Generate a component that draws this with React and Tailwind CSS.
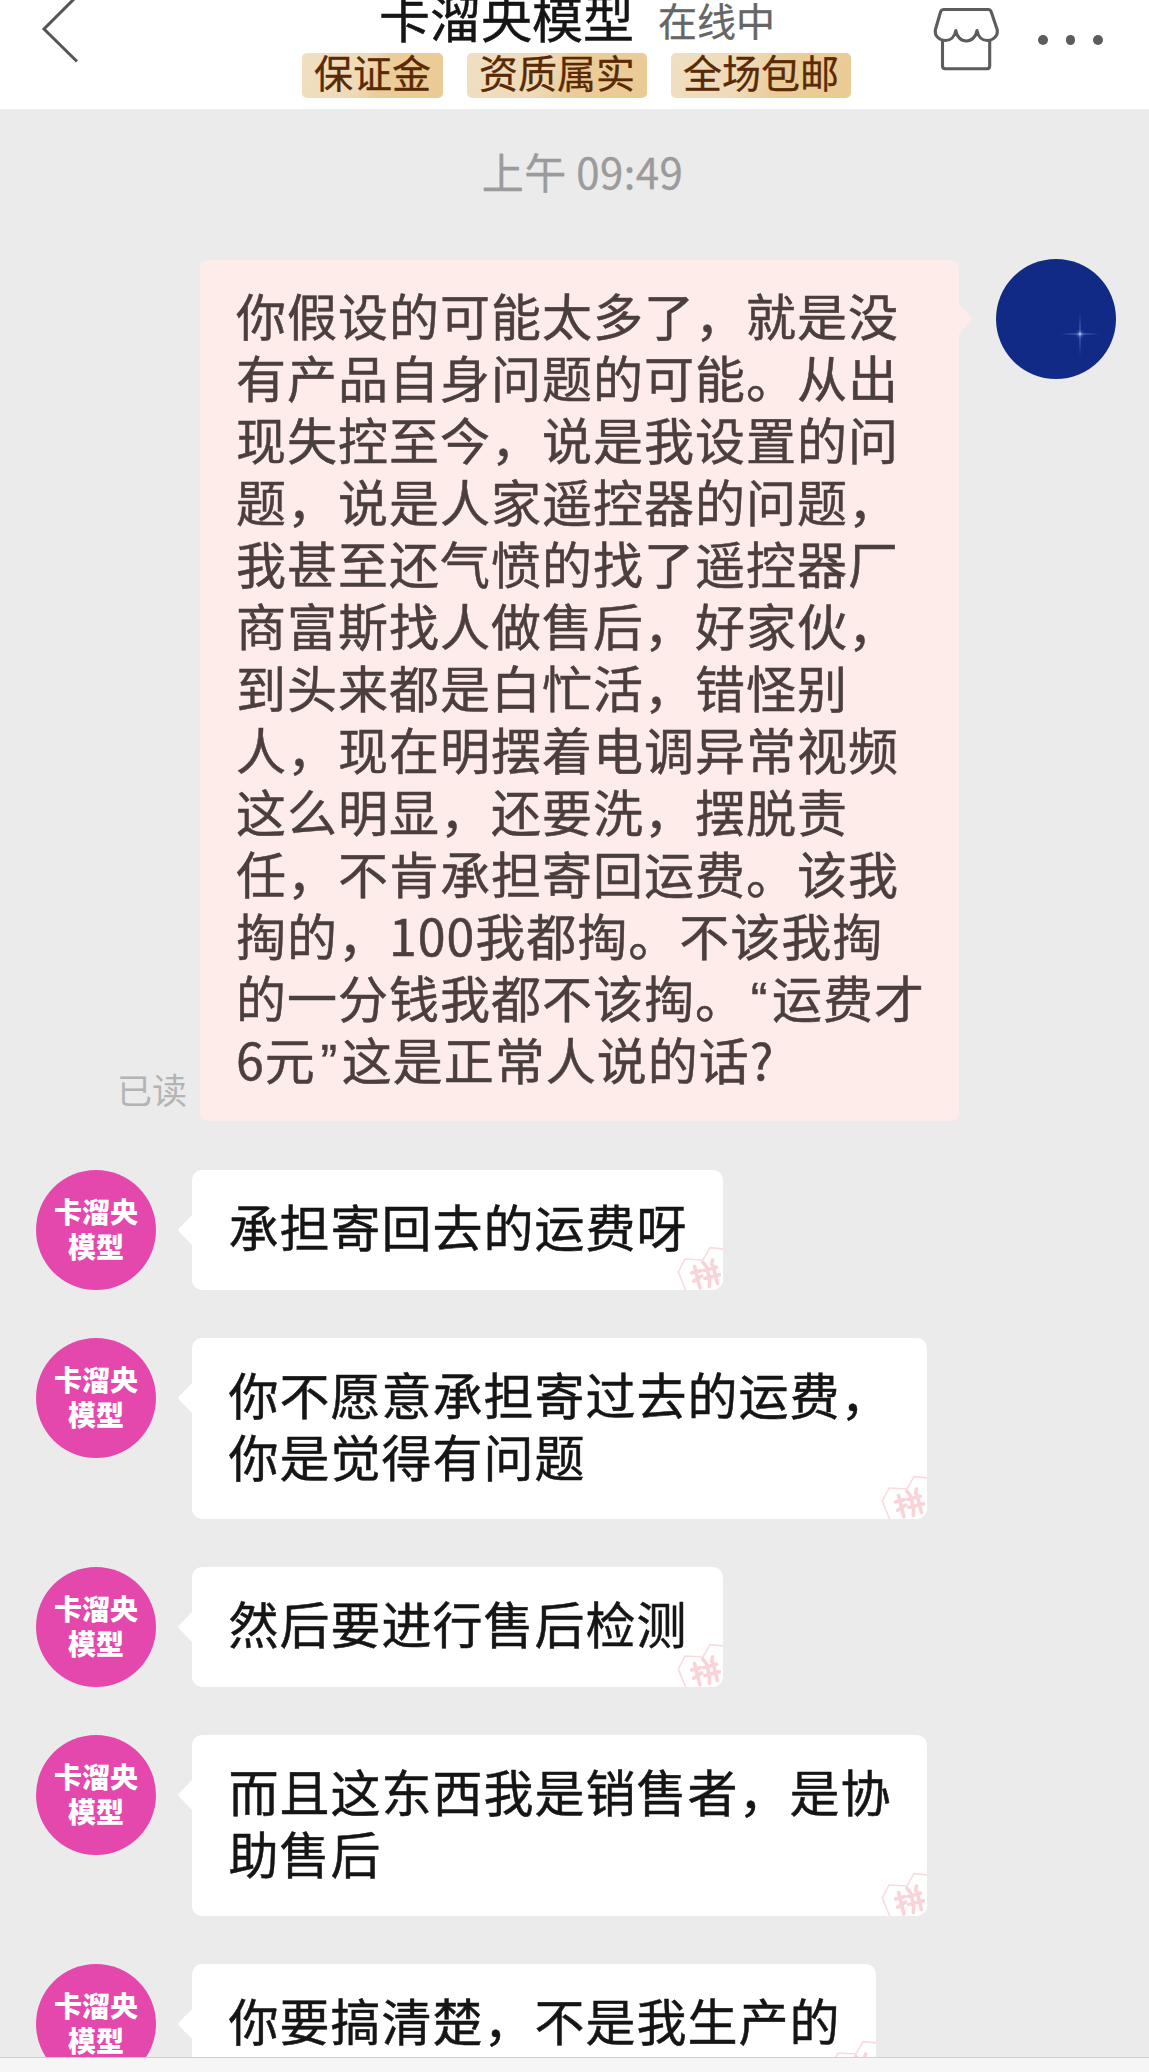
const CJK = "font-['Noto_Sans_CJK_SC',sans-serif]";

function BackIcon() {
  return (
    <svg className="ml-[36px] block shrink-0" width="48" height="70" viewBox="36 0 48 70" fill="none" stroke="#555" strokeWidth="3">
      <path d="M76-3 44 29 77 61.500" />
    </svg>
  );
}

function ShopIcon() {
  return (
    <svg className="block shrink-0" width="70" height="76" viewBox="931 0 70 76" fill="none" stroke="#5c5c5c" strokeWidth="3.100" strokeLinejoin="round">
      <path d="M944 9.500H988q2.500 0 3.200 2.300L997.300 30c.8 6-4.300 10.500-10 10.500-5 0-9.300-3.500-10.300-10-1 6.500-5.500 10.500-10.700 10.500s-9.500-4-10.500-10.500c-1 6.500-5.400 10-10.300 10-6 0-11-4.500-10.200-10.500L940.600 11.800q.8-2.300 3.400-2.300Z" />
      <path d="M942.500 40.500V66q0 2.700 2.700 2.700H987q2.700 0 2.700-2.700V40.500" />
    </svg>
  );
}

function Badge({ children }) {
  return (
    <span className="h-[45px] rounded-[5px] bg-[linear-gradient(112deg,#f0dfc2_0%,#efdab8_42%,#ebcd9a_58%,#ebcb94_100%)] px-3 text-[39px] leading-[37px] text-[#5a2a05] [-webkit-text-stroke:0.3px]">
      {children}
    </span>
  );
}

function Watermark() {
  return (
    <svg className="absolute right-0 bottom-0" width="50" height="46" viewBox="0 0 50 46" fill="none" stroke="#f9d3d7">
      <path d="M52 5 37 3.700 30 16 12 15 5.300 28 12.700 46" strokeWidth="1.600" strokeOpacity=".85" />
      <g strokeWidth="3.600" strokeLinecap="round" transform="rotate(-14 33 31)">
        <path d="M24 20v22M19.500 25.500h9M19.500 34l9-3M33 18l2 4M43 18l-2 4M32 26h13M31 34h15M35.500 24v12l-2 7M42 24v18" />
      </g>
    </svg>
  );
}

function SellerMessage({ lines }) {
  return (
    <div className="flex shrink-0 items-start pl-9">
      <div className="flex size-[120px] shrink-0 flex-col items-center justify-center rounded-full bg-[#e548ac] pb-[3px] text-[28px] leading-[35px] font-black text-white">
        <span>卡溜央</span>
        <span>模型</span>
      </div>
      <svg className="mt-[44px] ml-[21px] shrink-0" width="15" height="32" viewBox="0 0 15 32" fill="#fff">
        <path d="M15 1 2 14.500q-1.500 1.500 0 3L15 31Z" />
      </svg>
      <div className="relative min-h-[120px] overflow-hidden rounded-[10px] bg-white pt-6 pr-[35.500px] pb-[33px] pl-[36.500px] text-[50px] leading-[62px] tracking-[1px] text-[#151515] [-webkit-text-stroke:0.5px]">
        <Watermark />
        {lines.map((line) => (
          <div key={line} className="relative whitespace-nowrap">{line}</div>
        ))}
      </div>
    </div>
  );
}

function Quote({ children }) {
  return <span className="inline-block w-[26px] text-center font-['Liberation_Sans',sans-serif] text-[50px] leading-none tracking-normal">{children}</span>;
}

const MINE = [
  "你假设的可能太多了，就是没",
  "有产品自身问题的可能。从出",
  "现失控至今，说是我设置的问",
  "题，说是人家遥控器的问题，",
  "我甚至还气愤的找了遥控器厂",
  "商富斯找人做售后，好家伙，",
  "到头来都是白忙活，错怪别",
  "人，现在明摆着电调异常视频",
  "这么明显，还要洗，摆脱责",
  "任，不肯承担寄回运费。该我",
  "掏的，100我都掏。不该我掏",
  <>的一分钱我都不该掏。<Quote>“</Quote>运费才</>,
  <>6元<Quote>”</Quote>这是正常人说的话?</>,
];

const SELLER = [
  ["承担寄回去的运费呀"],
  ["你不愿意承担寄过去的运费，", "你是觉得有问题"],
  ["然后要进行售后检测"],
  ["而且这东西我是销售者，是协", "助售后"],
  ["你要搞清楚，不是我生产的"],
];

export default function App() {
  return (
    <div lang="zh-CN" className={`flex h-[2072px] w-[1149px] flex-col overflow-hidden bg-[#ebebeb] ${CJK}`}>
      <header className="flex h-[109px] shrink-0 items-start bg-white">
        <BackIcon />
        <div className="ml-[218px] flex w-[549px] shrink-0 flex-col">
          <div className="flex h-[53px] items-end pl-[77px] whitespace-nowrap">
            <h1 className="mb-[11px] w-[255px] text-[51px] leading-[51px] text-[#151515] [-webkit-text-stroke:0.5px]">卡溜央模型</h1>
            <span className="mb-[12px] ml-[24px] text-[39px] leading-[43px] text-[#666] [-webkit-text-stroke:0.3px]">在线中</span>
          </div>
          <div className="flex gap-6">
            <Badge>保证金</Badge>
            <Badge>资质属实</Badge>
            <Badge>全场包邮</Badge>
          </div>
        </div>
        <div className="ml-[80px] flex items-start">
          <ShopIcon />
          <div className="mt-[35px] ml-[37px] flex gap-[18px]">
            <i className="size-[9.500px] rounded-full bg-[#5c5c5c]" />
            <i className="size-[9.500px] rounded-full bg-[#5c5c5c]" />
            <i className="size-[9.500px] rounded-full bg-[#5c5c5c]" />
          </div>
        </div>
      </header>

      <main className="flex h-[1948px] shrink-0 flex-col overflow-hidden">
        <time className="mt-[32px] block h-[62px] shrink-0 pl-[16px] text-center text-[42px] leading-[60px] tracking-[0.4px] text-[#9b9b9b] [-webkit-text-stroke:0.3px]">上午 09:49</time>

        <section className="mt-[56px] flex shrink-0 items-start">
          <span className="mt-[805px] w-[200px] shrink-0 pr-[13px] text-right text-[35px] leading-[50px] text-[#b4b4b4]">已读</span>
          <div className="mt-px h-[861px] w-[759px] shrink-0 rounded-[8px] bg-[#feecea] pt-[23px] pl-9 text-[50px] leading-[62px] tracking-[1px] text-[#4a3f3d] [-webkit-text-stroke:0.5px]">
            {MINE.map((line, i) => (
              <div key={i} className="h-[62px] whitespace-nowrap">{line}</div>
            ))}
          </div>
          <svg className="mt-[44px] shrink-0" width="15" height="32" viewBox="0 0 15 32" fill="#feecea">
            <path d="M0 1 12.500 14.500q1.500 1.500 0 3L0 31Z" />
          </svg>
          <svg className="ml-[22px] shrink-0" width="120" height="120" viewBox="0 0 120 120">
            <defs>
              <radialGradient id="glow">
                <stop offset="0" stopColor="#fff" />
                <stop offset=".3" stopColor="#8fa6e8" stopOpacity=".5" />
                <stop offset="1" stopColor="#4a66bd" stopOpacity="0" />
              </radialGradient>
            </defs>
            <circle cx="60" cy="60" r="60" fill="#112a86" />
            <ellipse cx="84" cy="75" rx="24" ry="1" fill="url(#glow)" />
            <ellipse cx="84" cy="75" rx="1" ry="28" fill="url(#glow)" />
            <circle cx="84" cy="75" r="5" fill="url(#glow)" />
          </svg>
        </section>

        <section className="mt-[49px] flex flex-col gap-12">
          {SELLER.map((lines) => (
            <SellerMessage key={lines[0]} lines={lines} />
          ))}
        </section>
      </main>
      <footer className="h-[15px] shrink-0 border-t border-[#cfcfcf] bg-[#f6f6f6]" />
    </div>
  );
}
